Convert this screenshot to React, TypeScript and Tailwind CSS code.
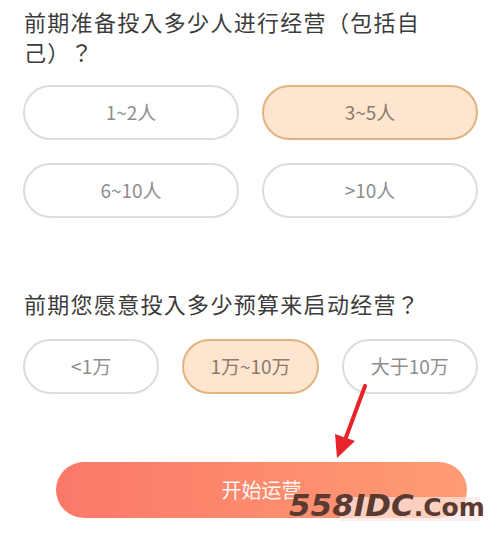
import { useState } from "react";

const peopleOptions = ["1~2人", "3~5人", "6~10人", ">10人"];
const budgetOptions = ["<1万", "1万~10万", "大于10万"];

const font = { fontFamily: '"Noto Sans CJK SC", "Noto Sans", sans-serif' };
// JP variant centers the fullwidth ？ like the reference
const titleFont = { fontFamily: '"Noto Sans CJK JP", "Noto Sans CJK SC", sans-serif' };

const Option = ({
  label,
  active,
  onClick,
}: {
  label: string;
  active: boolean;
  onClick: () => void;
}) => (
  <button
    onClick={onClick}
    className={`h-[55px] rounded-full border-2 text-[19px] flex items-center justify-center ${
      active
        ? "bg-[#fde5d0] border-[#e3b37f] text-[#8c7a6c]"
        : "bg-white border-[#dcdcdc] text-[#8e8e8e]"
    }`}
  >
    {label}
  </button>
);

export default function App() {
  const [people, setPeople] = useState(1);
  const [budget, setBudget] = useState(1);

  return (
    <div className="relative w-[501px] h-[544px] bg-white overflow-hidden" style={font}>
      <div className="px-[23px] pt-[6px]">
        <h2
          className="w-[412px] pl-[1px] text-[22px] leading-[30px] tracking-[1.3px] text-[#3c3c3c] font-normal"
          style={titleFont}
        >
          前期准备投入多少人进行经营（包括自己）？
        </h2>

        <div className="mt-[19px] grid grid-cols-2 gap-x-[23px] gap-y-[23px]">
          {peopleOptions.map((o, i) => (
            <Option key={o} label={o} active={people === i} onClick={() => setPeople(i)} />
          ))}
        </div>

        <h2
          className="mt-[70px] pl-[1px] text-[22px] leading-[30px] tracking-[1.3px] text-[#3c3c3c] font-normal"
          style={titleFont}
        >
          前期您愿意投入多少预算来启动经营？
        </h2>

        <div className="mt-[21px] grid grid-cols-3 gap-x-[23px]">
          {budgetOptions.map((o, i) => (
            <Option key={o} label={o} active={budget === i} onClick={() => setBudget(i)} />
          ))}
        </div>

        <div className="mt-[68px] pl-[33px] pr-[11px]">
          <button className="w-full h-[56px] rounded-full bg-gradient-to-r from-[#fb7868] to-[#fe9c74] text-[#fff6f0] text-[20px] flex items-center justify-center">
            开始运营
          </button>
        </div>
      </div>

      {/* red annotation arrow */}
      <svg className="absolute left-0 top-0 pointer-events-none" width="501" height="544">
        <line x1="365" y1="386" x2="345" y2="440" stroke="#e8242a" strokeWidth="4" strokeLinecap="round" />
        <polygon points="337,458 335,434 355,441" fill="#e8242a" />
      </svg>

      {/* watermark */}
      <div className="absolute left-[340px] top-[497px] w-[140px] h-[24px] bg-[#fbe8e2]/70" />
      <div
        className="absolute left-[289px] top-[490px] italic font-extrabold text-[#5b3a32] leading-none flex items-baseline"
        style={{ fontFamily: '"DejaVu Sans", sans-serif' }}
      >
        <span className="text-[31px]">558IDC</span>
        <span className="text-[25px] not-italic font-bold">.Com</span>
      </div>
    </div>
  );
}
